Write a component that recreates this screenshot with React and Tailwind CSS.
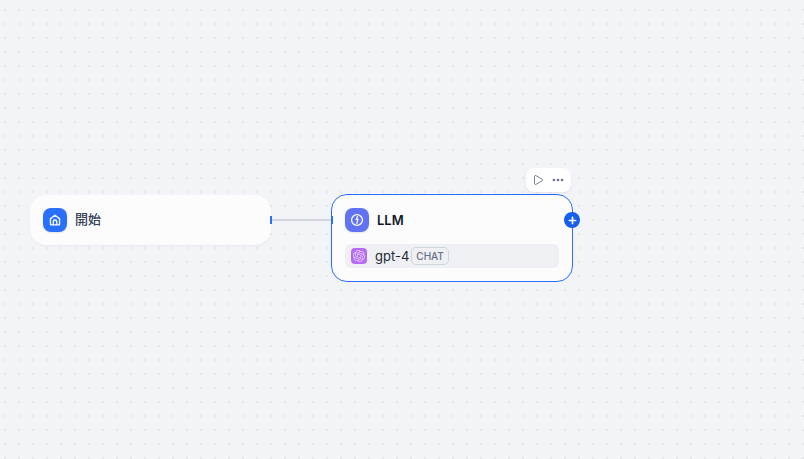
import React from 'react'
import { Ellipsis, Play, Plus } from 'lucide-react'
import { SiOpenai } from 'react-icons/si'

const cjk = { fontFamily: 'Inter, "Noto Sans CJK TC", sans-serif' }

function HomeIcon() {
  return (
    <svg viewBox="0 0 16 16" className="h-[14px] w-[14px] text-white" fill="none" stroke="currentColor" strokeWidth="1.5" strokeLinejoin="round">
      <path d="M2.8 6.6 8 2.6l5.2 4v6.2a.8.8 0 0 1-.8.8H3.6a.8.8 0 0 1-.8-.8Z" />
      <path d="M6 13.5V10a2 2 0 0 1 4 0v3.5" />
    </svg>
  )
}

function LlmIcon() {
  return (
    <svg viewBox="0 0 16 16" className="h-[14px] w-[14px] text-white" fill="none" stroke="currentColor" strokeWidth="1.5">
      <circle cx="8" cy="8" r="6.2" />
      <path d="M8.8 3.4 7.2 7.2h1.8l-1.4 5.2" strokeWidth="1.4" />
    </svg>
  )
}

export default function App() {
  return (
    <div
      className="relative h-[459px] w-[804px] overflow-hidden bg-[#f2f4f7] bg-[radial-gradient(circle,#e4e6ea_1.2px,transparent_1.5px)] bg-[length:14px_14px] bg-[position:-2px_3px]"
      style={cjk}
    >
      {/* connection */}
      <div className="absolute left-[272px] top-[219px] h-[2px] w-[60px] bg-[#d0d5dc]" />

      {/* start node */}
      <div className="absolute left-[30px] top-[195px] flex h-[50px] w-[241px] items-center gap-2 rounded-2xl bg-[#fcfcfd] pl-[13px] shadow-[0_1px_2px_rgba(16,24,40,0.05)]">
        <div className="flex h-6 w-6 items-center justify-center rounded-lg bg-[#2970ff] shadow-[0_1px_2px_rgba(16,24,40,0.1)]">
          <HomeIcon />
        </div>
        <span className="text-[13px] font-medium text-[#344054]">開始</span>
        <div className="absolute right-[-1px] top-[21px] h-2 w-[2px] bg-[#2970ff]" />
      </div>

      {/* llm node */}
      <div className="absolute left-[331px] top-[194px] h-[88px] w-[242px] rounded-2xl border border-[#2970ff] bg-[#fcfcfd] px-[13px] pt-[13px]">
        <div className="flex items-center gap-2">
          <div className="flex h-6 w-6 items-center justify-center rounded-lg bg-[#6172f3] shadow-[0_1px_2px_rgba(16,24,40,0.1)]">
            <LlmIcon />
          </div>
          <span className="translate-y-px text-[13px] font-semibold text-[#101828]">LLM</span>
        </div>
        <div className="mt-3 flex h-6 items-center rounded-md bg-[#eff0f3] pl-[6px]">
          <div className="flex h-4 w-4 items-center justify-center rounded bg-[#b46cf7]">
            <SiOpenai className="h-3 w-3 text-white/70" />
          </div>
          <span className="ml-2 translate-y-px text-[13px] text-[#1d2939]">gpt-4</span>
          <span className="ml-[2px] flex h-[18px] items-center rounded-[5px] border border-[#d0d5dd] px-1 text-[10px] font-medium text-[#667085]">CHAT</span>
        </div>
        <div className="absolute left-[-1px] top-[21px] h-2 w-[2px] bg-[#2970ff]" />
        <div className="absolute right-[-8px] top-[17px] flex h-4 w-4 items-center justify-center rounded-full bg-[#155eef]">
          <Plus className="h-[11px] w-[11px] text-white" strokeWidth={3.5} />
        </div>
      </div>

      {/* node toolbar */}
      <div className="absolute left-[526px] top-[168px] flex h-6 w-[45px] items-center gap-[7px] rounded-lg bg-white pl-[6px] shadow-[0_2px_4px_rgba(16,24,40,0.06)]">
        <Play className="h-3 w-3 text-[#475467]" strokeWidth={1.5} />
        <Ellipsis className="h-[14px] w-[14px] text-[#667085]" strokeWidth={2.5} />
      </div>
    </div>
  )
}
